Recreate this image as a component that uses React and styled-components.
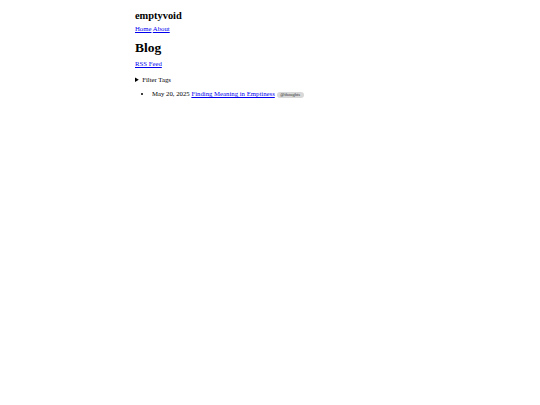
import React from "react";
import styled, { createGlobalStyle } from "styled-components";

const GlobalStyle = createGlobalStyle`
  body {
    margin: 0;
    background: #fff;
    color: #000;
    font-family: "Liberation Serif", "Times New Roman", serif;
    font-size: 6.75px;
  }
`;

const posts = [
  {
    date: "May 20, 2025",
    title: "Finding Meaning in Emptiness",
    tags: ["@thoughts"],
  },
];

const App = () => {
  return (
    <>
      <GlobalStyle />
      <Page>
        <Header>
          <SiteTitle>emptyvoid</SiteTitle>
          <Nav>
            <Link href="#">Home</Link> <Link href="#">About</Link>
          </Nav>
        </Header>
        <Main>
          <Title>Blog</Title>
          <Feed>
            <Link href="#">RSS Feed</Link>
          </Feed>
          <Filter>
            <Summary>Filter Tags</Summary>
          </Filter>
          <PostList>
            {posts.map((post) => (
              <Post key={post.title}>
                {post.date} <Link href="#">{post.title}</Link>{" "}
                {post.tags.map((tag) => (
                  <Tag key={tag}>{tag}</Tag>
                ))}
              </Post>
            ))}
          </PostList>
        </Main>
      </Page>
    </>
  );
};

const Page = styled.div`
  width: 270px;
  margin: 0 auto;
  padding-top: 10px;
`;

const Header = styled.header`
  display: flex;
  flex-direction: column;
`;

const SiteTitle = styled.div`
  font-size: 10.4px;
  font-weight: bold;
  line-height: 12px;
`;

const Nav = styled.nav`
  line-height: 8px;
  margin-top: 3px;
`;

const Link = styled.a`
  color: #0000ee;
  text-decoration: underline;
`;

const Main = styled.main``;

const Title = styled.h1`
  font-size: 13.5px;
  line-height: 16px;
  margin: 6.7px 0 4.3px;
`;

const Feed = styled.p`
  margin: 0 0 8px;
  line-height: 8px;
`;

const Filter = styled.details``;

const Summary = styled.summary`
  line-height: 8px;
  cursor: pointer;
`;

const PostList = styled.ul`
  margin: 6.5px 0;
  padding-left: 17px;
  line-height: 8px;
`;

const Post = styled.li``;

const Tag = styled.span`
  display: inline-block;
  background: #d8d8d8;
  border-radius: 3px;
  padding: 0 3.8px;
  font-size: 4.5px;
  line-height: 6px;
  color: #333;
  vertical-align: middle;
`;

export default App;
